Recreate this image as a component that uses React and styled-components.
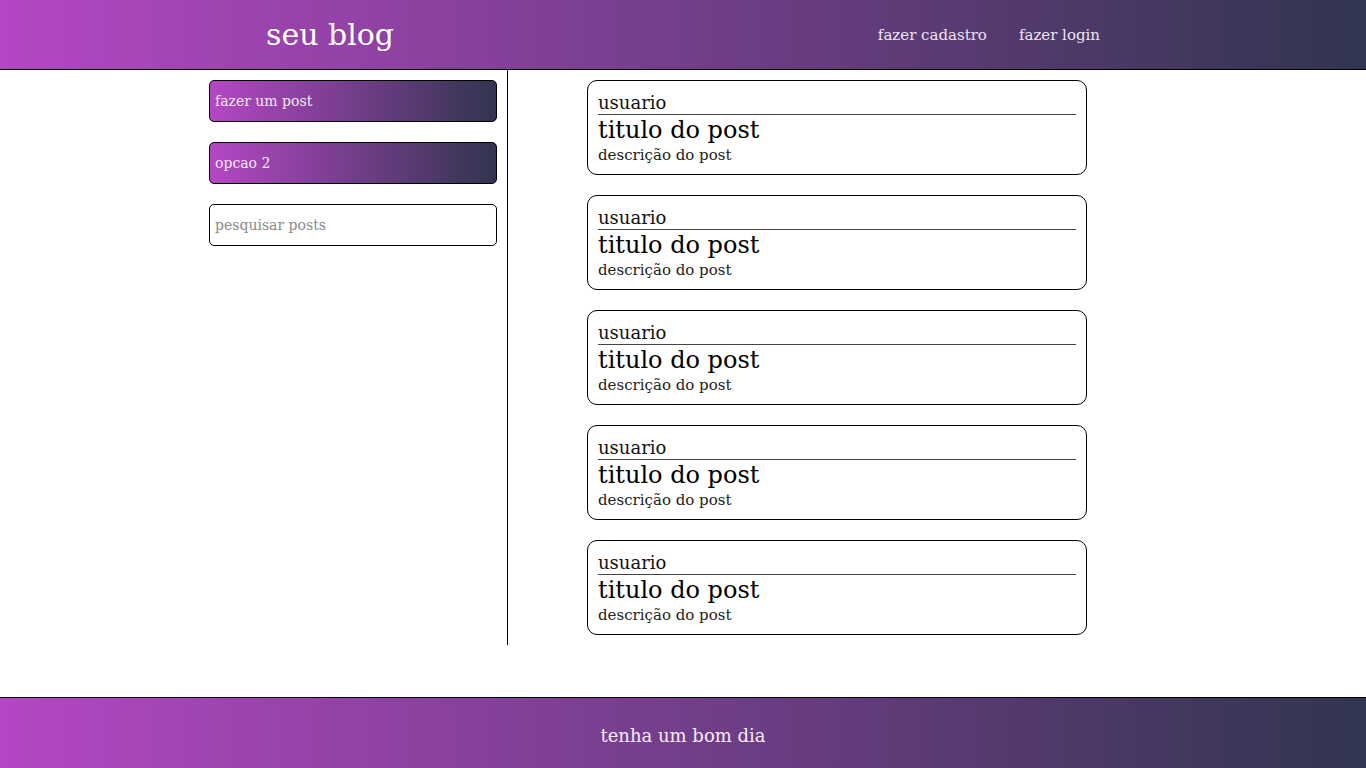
import styled, { createGlobalStyle } from "styled-components";

const GlobalStyle = createGlobalStyle`
  * {
    box-sizing: border-box;
  }

  body {
    margin: 0;
    font-family: "DejaVu Serif", "Liberation Serif", serif;
    background: #fff;
  }
`;

const gradient = "linear-gradient(to right, #b447c4, #31354f)";

const Page = styled.div`
  min-height: 100vh;
  display: flex;
  flex-direction: column;
`;

const Header = styled.header`
  height: 70px;
  display: flex;
  align-items: center;
  justify-content: space-between;
  padding: 0 266px;
  background: ${gradient};
  border-bottom: 1px solid #000;
`;

const Logo = styled.h1`
  margin: 0;
  font-size: 30px;
  font-weight: normal;
  color: #fff;
`;

const Nav = styled.nav`
  display: flex;
  gap: 32px;
`;

const NavLink = styled.a`
  color: #ece4f2;
  font-size: 15px;
  text-decoration: none;
  cursor: pointer;
`;

const Main = styled.main`
  display: flex;
  padding-left: 209px;
`;

const Sidebar = styled.aside`
  width: 299px;
  padding: 10px 10px 0 0;
  border-right: 1px solid #000;
  display: flex;
  flex-direction: column;
  gap: 20px;
`;

const MenuButton = styled.button`
  height: 42px;
  width: 100%;
  padding: 0 5px;
  text-align: left;
  font-family: inherit;
  font-size: 14px;
  color: #f4e8f6;
  background: ${gradient};
  border: 1px solid #000;
  border-radius: 5px;
  cursor: pointer;
`;

const Search = styled.input`
  height: 42px;
  width: 100%;
  padding: 0 5px;
  font-family: inherit;
  font-size: 14px;
  border: 1px solid #000;
  border-radius: 5px;
  outline: none;

  &::placeholder {
    color: #8a8a8a;
  }
`;

const Feed = styled.section`
  padding: 10px 0 10px 79px;
  display: flex;
  flex-direction: column;
  gap: 20px;
`;

const Card = styled.article`
  width: 500px;
  height: 95px;
  padding: 10px;
  border: 1px solid #000;
  border-radius: 10px;
`;

const User = styled.div`
  font-size: 18px;
  line-height: 23px;
  color: #111;
  border-bottom: 1px solid #444;
`;

const Title = styled.h2`
  margin: 0;
  font-size: 24px;
  font-weight: normal;
  line-height: 31px;
  color: #000;
`;

const Description = styled.p`
  margin: 0;
  font-size: 15px;
  line-height: 18px;
  color: #222;
`;

const Footer = styled.footer`
  margin-top: auto;
  height: 71px;
  display: flex;
  align-items: center;
  justify-content: center;
  background: ${gradient};
  border-top: 1px solid #000;
  color: #f6ecf8;
  font-size: 18px;
  padding-top: 4px;
`;

const posts = [1, 2, 3, 4, 5];

const App = () => {
  return (
    <Page>
      <GlobalStyle />
      <Header>
        <Logo>seu blog</Logo>
        <Nav>
          <NavLink>fazer cadastro</NavLink>
          <NavLink>fazer login</NavLink>
        </Nav>
      </Header>
      <Main>
        <Sidebar>
          <MenuButton>fazer um post</MenuButton>
          <MenuButton>opcao 2</MenuButton>
          <Search placeholder="pesquisar posts" />
        </Sidebar>
        <Feed>
          {posts.map((id) => (
            <Card key={id}>
              <User>usuario</User>
              <Title>titulo do post</Title>
              <Description>descrição do post</Description>
            </Card>
          ))}
        </Feed>
      </Main>
      <Footer>tenha um bom dia</Footer>
    </Page>
  );
};

export default App;
